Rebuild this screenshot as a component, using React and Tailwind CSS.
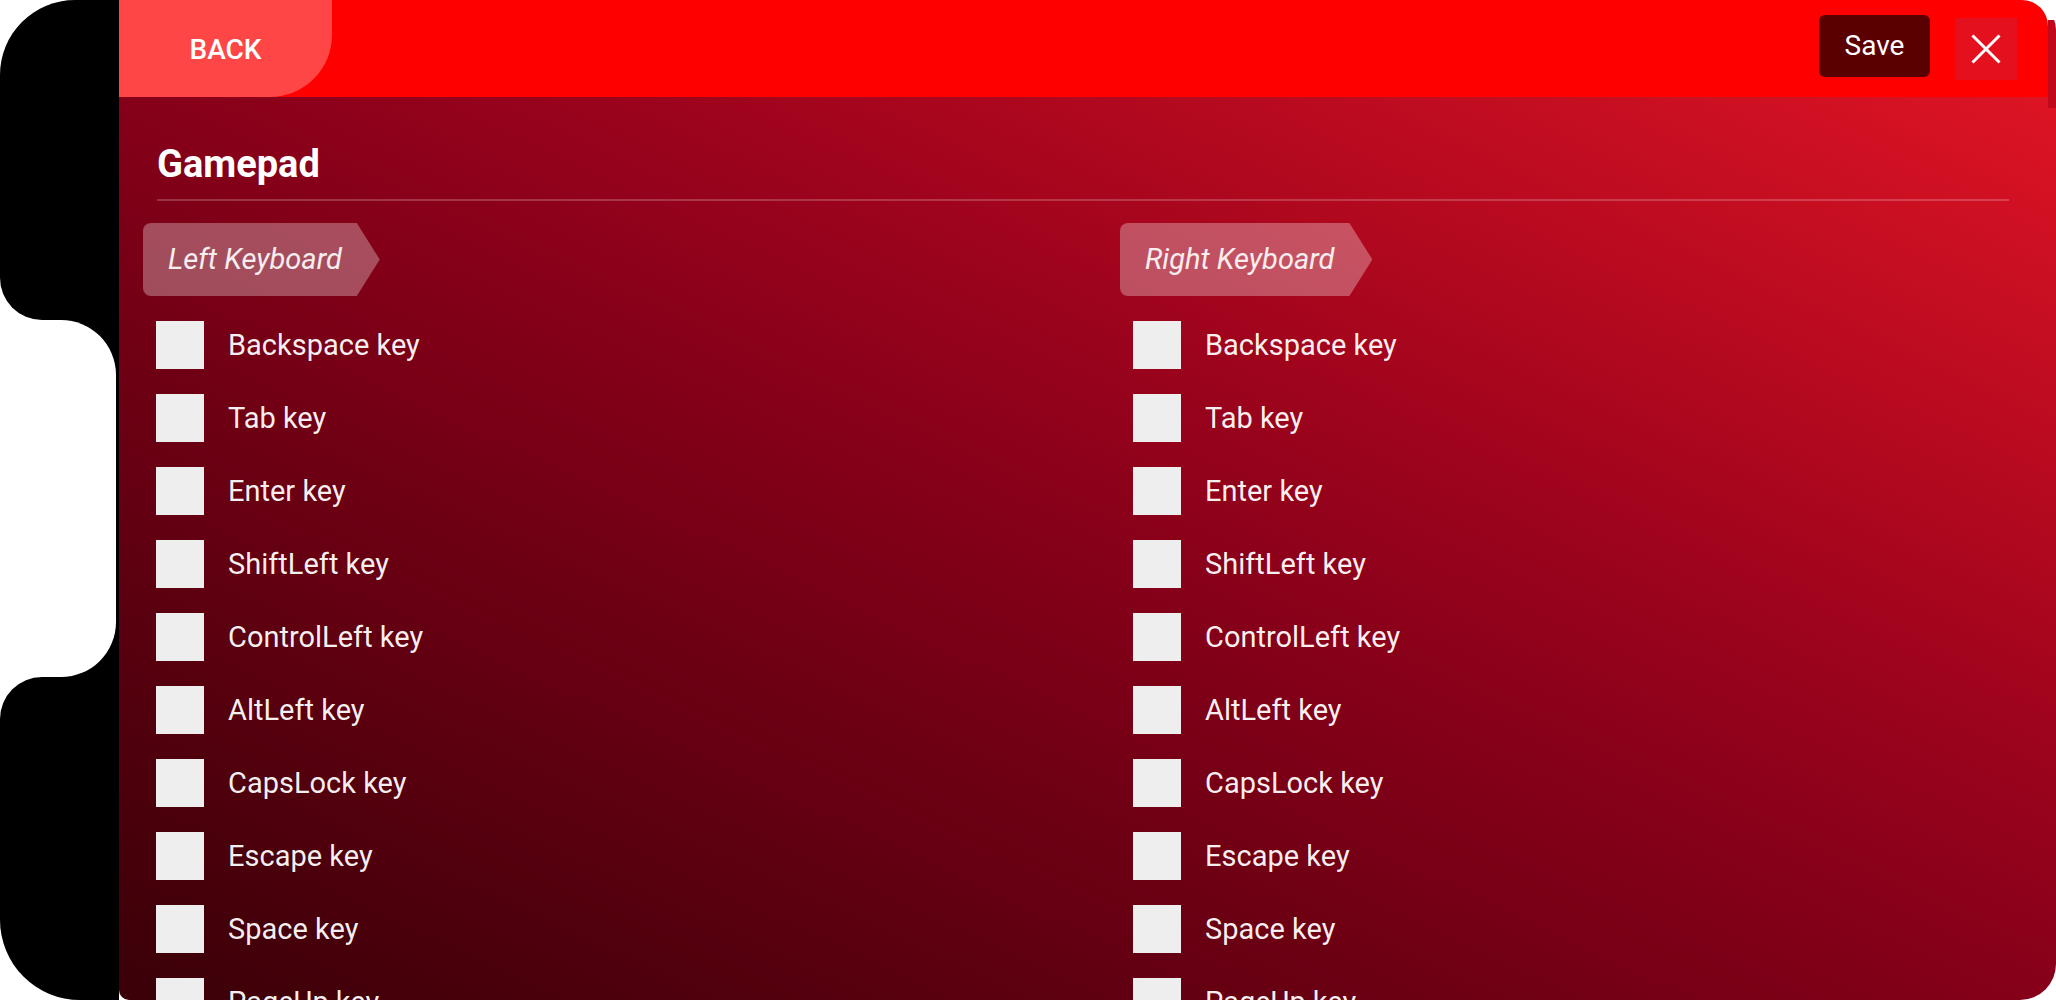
import React from 'react';

const KEYS = [
  'Backspace',
  'Tab',
  'Enter',
  'ShiftLeft',
  'ControlLeft',
  'AltLeft',
  'CapsLock',
  'Escape',
  'Space',
  'PageUp',
  'PageDown',
];

function Tab({ label }) {
  return (
    <div className="self-start h-[73px] flex items-center pl-[25px] pr-[38px] rounded-l-[8px] bg-white/30 [clip-path:polygon(0_0,calc(100%_-_23px)_0,100%_50%,calc(100%_-_23px)_100%,0_100%)]">
      <span className="italic text-[29px] text-white/90">{label}</span>
    </div>
  );
}

function KeyColumn({ title, width }) {
  return (
    <div className={`flex flex-col ${width}`}>
      <Tab label={title} />
      <div className="flex flex-col gap-[25px] mt-[25px] ml-[13px]">
        {KEYS.map((k) => (
          <label key={k} className="flex items-center gap-[24px]">
            <span className="w-[48px] h-[48px] bg-[#eeeeee] shrink-0" />
            <span className="text-[29px] leading-[48px] text-white/95">{k} key</span>
          </label>
        ))}
      </div>
    </div>
  );
}

export default function App() {
  return (
    <div
      className="w-[2056px] h-[1000px] bg-white flex overflow-hidden"
      style={{ fontFamily: 'Roboto, "Liberation Sans", sans-serif' }}
    >
      {/* phone frame edge */}
      <div className="w-[119px] flex flex-col shrink-0">
        <div className="h-[320px] bg-black rounded-tl-[75px] rounded-bl-[42px]" />
        <div className="h-[357px] bg-black">
          <div className="w-[116px] h-full bg-white rounded-r-[55px]" />
        </div>
        <div className="flex-1 bg-black rounded-tl-[42px] rounded-bl-[80px]" />
      </div>

      {/* screen */}
      <div className="relative flex-1 flex flex-col rounded-tr-[30px] rounded-br-[36px] rounded-bl-[10px] overflow-hidden">
        <div className="h-[97px] mr-[8px] bg-[#ff0000] rounded-tr-[26px] flex items-center shrink-0">
          <button className="w-[213px] h-full bg-[#ff4646] rounded-br-[62px] flex items-center justify-center pt-[3px] text-white text-[28px] font-medium">
            BACK
          </button>
          <div className="ml-auto flex items-center gap-[25px] pr-[31px]">
            <button className="w-[111px] h-[62px] mb-[5px] bg-[#5a0000] rounded-[6px] text-white text-[28px]">
              Save
            </button>
            <button className="w-[62px] h-[62px] bg-[#e5101e] flex items-center justify-center">
              <svg width="30" height="30" viewBox="0 0 30 30" fill="none" stroke="white" strokeWidth="3">
                <path d="M1.5 1.5 L28.5 28.5 M28.5 1.5 L1.5 28.5" />
              </svg>
            </button>
          </div>
        </div>

        <div className="flex-1 overflow-hidden bg-linear-to-tr from-[#3a0008] via-[#860019] to-[#dd1424]">
          <div className="ml-[38px] mr-[47px] mt-[45px]">
            <h1 className="text-[38px] leading-[44px] font-bold text-white">Gamepad</h1>
            <div className="h-[2px] bg-white/20 mt-[13px]" />
          </div>
          <div className="flex pl-[24px] mt-[22px]">
            <KeyColumn title="Left Keyboard" width="w-[977px]" />
            <KeyColumn title="Right Keyboard" width="flex-1" />
          </div>
        </div>

        {/* scrollbar thumb */}
        <div className="absolute right-0 top-[20px] w-[8px] h-[88px] bg-[#c00a1c]" />
      </div>
    </div>
  );
}
